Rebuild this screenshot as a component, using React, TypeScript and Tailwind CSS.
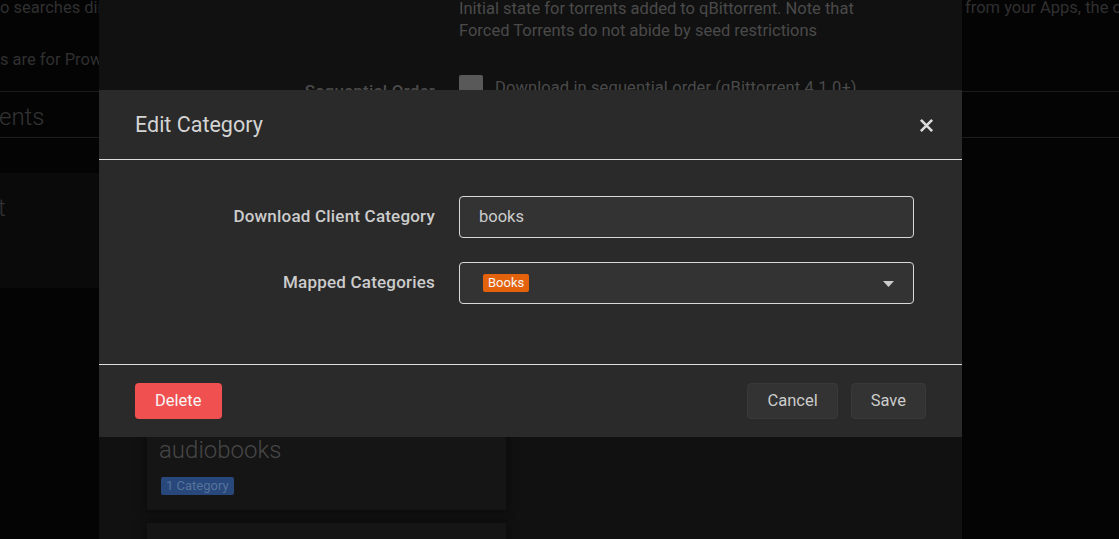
import React from 'react'

const font = { fontFamily: 'Roboto, "Liberation Sans", sans-serif' }

const FormRow = ({ label, children }: { label: string; children: React.ReactNode }) => (
  <div className="flex items-center mb-6">
    <label className="w-[300px] mr-6 text-right text-[17px] font-medium tracking-[0.2px] text-[#cccccc]">{label}</label>
    <div className="flex-1 mr-3">{children}</div>
  </div>
)

const CloseIcon = () => (
  <svg width="15" height="15" viewBox="0 0 16 16" className="text-[#dddddd]">
    <path d="M2 2 L14 14 M14 2 L2 14" stroke="currentColor" strokeWidth="2.8" strokeLinecap="butt" />
  </svg>
)

const EditCategoryModal = () => (
  <div className="absolute top-[90px] left-[99px] w-[863px] bg-[#2a2a2a]">
    <div className="flex h-[70px] items-center justify-between pl-[36px] pr-[28px] pt-[2px] border-b border-[#dedede]">
      <h2 className="text-[21.5px] text-[#d4d4d4]">Edit Category</h2>
      <button className="flex items-center justify-center w-[15px] h-[15px]">
        <CloseIcon />
      </button>
    </div>

    <div className="px-[36px] pt-[36px] pb-[36px] border-b border-[#dedede]">
      <FormRow label="Download Client Category">
        <div className="flex h-[42px] items-center rounded-[4px] border border-[#d8d8d8] bg-[#333333] pl-[19px] text-[16.5px] text-[#cccccc]">
          books
        </div>
      </FormRow>
      <FormRow label="Mapped Categories">
        <div className="flex h-[42px] items-center justify-between rounded-[4px] border border-[#d8d8d8] bg-[#333333] pl-[23px] pr-[19px]">
          <span className="flex h-[18px] items-center rounded-[2px] bg-[#e5620c] px-[5px] text-[13px] text-[#f4f4f4]">
            Books
          </span>
          <svg width="11" height="6" viewBox="0 0 11 6" className="mt-[1px]">
            <path d="M0 0 L11 0 L5.5 6 Z" fill="#cccccc" />
          </svg>
        </div>
      </FormRow>
    </div>

    <div className="flex items-center justify-between px-[36px] py-[18px]">
      <button className="h-[36px] px-[20px] rounded-[4px] bg-[#f05050] text-[16.5px] text-[#f6f6f6]">Delete</button>
      <div className="flex">
        <button className="h-[36px] px-[19px] rounded-[4px] border border-[#393939] bg-[#333333] text-[16.5px] text-[#cccccc]">
          Cancel
        </button>
        <button className="ml-[13px] h-[36px] px-[19px] rounded-[4px] border border-[#393939] bg-[#333333] text-[16.5px] text-[#cccccc]">
          Save
        </button>
      </div>
    </div>
  </div>
)

const ClientModal = () => (
  <div className="absolute top-0 bottom-0 left-[99px] w-[863px] bg-[#111111] overflow-hidden">
    <div className="-mt-[2px] ml-[360px] text-[16.5px] leading-[22px] text-[#4a4a4a] w-[410px]">
      Initial state for torrents added to qBittorrent. Note that Forced Torrents do not abide by seed restrictions
    </div>
    <div className="flex items-start mt-[33px]">
      <span className="w-[336px] pt-[4px] text-right text-[17px] font-medium tracking-[0.2px] text-[#4a4a4a]">Sequential Order</span>
      <span className="ml-[24px] w-[24px] h-[24px] rounded-[2px] bg-[#595959]" />
      <span className="ml-[12px] pt-[1px] text-[16.5px] tracking-[0.1px] text-[#4a4a4a]">Download in sequential order (qBittorrent 4.1.0+)</span>
    </div>

    <div className="ml-[48px] mt-[320px] w-[359px] bg-[#151515] shadow-[0_0_10px_rgba(0,0,0,0.5)] px-[12px] pb-[13px] pt-[10px]">
      <div className="text-[24px] font-light leading-[30px] text-[#474747]">audiobooks</div>
      <span className="mt-[12px] ml-[2px] inline-flex h-[18px] items-center rounded-[2px] bg-[#28477a] px-[5px] text-[13px] text-[#56729c]">
        1 Category
      </span>
    </div>
    <div className="ml-[48px] mt-[13px] h-[80px] w-[359px] bg-[#151515] shadow-[0_0_10px_rgba(0,0,0,0.5)]" />
  </div>
)

export default function App() {
  return (
    <div className="relative h-[539px] w-[1119px] overflow-hidden bg-[#040405]" style={font}>
      <div className="flex -mt-[3px] text-[16.5px] leading-[22px] text-[#303030] whitespace-nowrap">
        <span className="w-[965px] shrink-0">o searches directly</span>
        <span className="shrink-0">from your Apps, the client</span>
      </div>
      <div className="mt-[30px] text-[16.5px] leading-[22px] text-[#303030] whitespace-nowrap">s are for Prowlarr searches</div>
      <div className="mt-[20px] border-t border-[#1c1c1c]" />
      <div className="flex h-[45px] items-center pt-[5px] text-[24px] font-light text-[#333333]">
        <span className="-ml-[1px]">ents</span>
      </div>
      <div className="border-t border-[#1c1c1c]" />
      <div className="mt-[35px] h-[115px] w-[99px] bg-[#0a0a0a] pt-[17px] text-[24px] font-light text-[#333333]">
        <span className="-ml-[2px]">t</span>
      </div>

      <ClientModal />
      <EditCategoryModal />
    </div>
  )
}
